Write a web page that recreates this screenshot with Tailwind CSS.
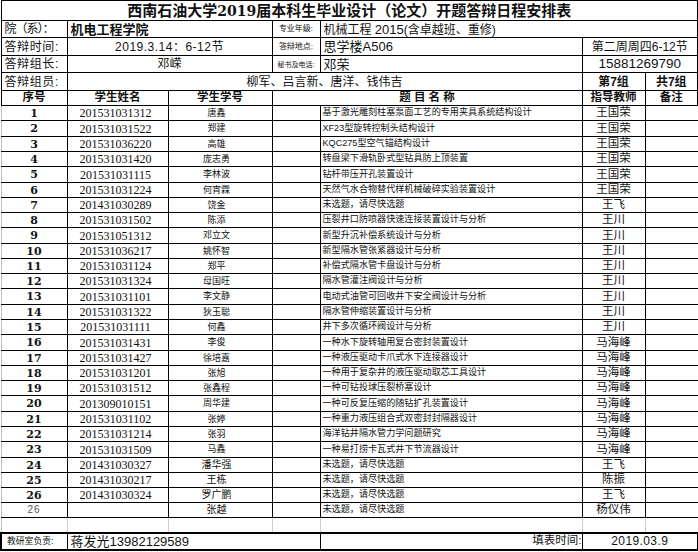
<!DOCTYPE html>
<html lang="zh">
<head>
<meta charset="utf-8">
<script src="https://cdn.jsdelivr.net/npm/@tailwindcss/browser@4"></script>
<title>开题答辩日程安排表</title>
</head>
<body class="bg-white text-[#111] overflow-hidden font-['Liberation_Sans','Noto_Sans_CJK_SC',sans-serif]">
<table class="w-[697px] table-fixed border-collapse leading-none whitespace-nowrap [&_td]:border [&_td]:border-black [&_td]:p-0 [&_td]:text-center [&_td]:overflow-hidden">
<colgroup><col class="w-[66px]"><col class="w-[101px]"><col class="w-[104px]"><col class="w-[48px]"><col class="w-[262px]"><col class="w-[63px]"><col class="w-[53px]"></colgroup>
<thead>
<tr class="h-[20px]"><td colspan="7" class="text-[15px] font-bold border-r-2!">西南石油大学<span class="font-['DejaVu_Serif'] text-[14px]">2019</span>届本科生毕业设计（论文）开题答辩日程安排表</td></tr>
</thead>
<tbody class="[&_td:first-child]:text-left! [&_td:first-child]:pl-[3px]! [&_td:first-child]:text-[12px] [&_td:last-child]:border-r-2!">
<tr class="h-[17px]"><td class="tracking-[-1px]">院（系）：</td><td colspan="2" class="text-left! pl-[3px]! text-[13px] font-bold">机电工程学院</td><td class="text-[8px]">专业年级:</td><td colspan="3" class="text-left! pl-[3px]! text-[12px]">机械工程 <span class="text-[13px]">2015</span>(含卓越班、重修)</td></tr>
<tr class="h-[18px]"><td class="tracking-[.6px]">答辩时间:</td><td colspan="2" class="text-[12px] tracking-[.5px]">2019.3.14：6-12节</td><td class="text-[8px]">答辩地点:</td><td class="text-left! pl-[3px]! text-[13px]">思学楼A506</td><td colspan="2" class="text-[12px]">第二周周四6-12节</td></tr>
<tr class="h-[17px]"><td class="tracking-[.6px]">答辩组长:</td><td colspan="2" class="text-[12px]">邓嵘</td><td class="text-[7px]">秘书及电话:</td><td class="text-left! pl-[3px]! text-[13px]">邓荣</td><td colspan="2" class="text-[13.5px]">15881269790</td></tr>
<tr class="h-[18px]"><td class="tracking-[.6px]">答辩组员:</td><td colspan="4" class="text-[12px]">柳军、吕言新、唐洋、钱伟吉</td><td class="text-[12px] font-bold">第7组</td><td class="text-[12px] font-bold">共7组</td></tr>
</tbody>
<tbody>
<tr class="h-[15px] text-[11.5px] font-bold"><td>序号</td><td>学生姓名</td><td>学生学号</td><td colspan="2">题 目 名 称</td><td>指导教师</td><td class="border-r-2!">备注</td></tr>
</tbody>
<tbody class="[&_td:nth-child(1)]:font-bold [&_td:nth-child(1)]:font-['DejaVu_Serif'] [&_td:nth-child(1)]:text-[11px] [&_td:nth-child(1)]:border-l-[#c4c4c4]! [&_td:nth-child(2)]:font-['Liberation_Serif'] [&_td:nth-child(2)]:text-[12px] [&_td:nth-child(2)]:pr-[4px]! [&_td:nth-child(3)]:text-[9px] [&_td:nth-child(3)]:pr-[7px]! [&_td:nth-child(5)]:text-left! [&_td:nth-child(5)]:pl-[2px]! [&_td:nth-child(5)]:text-[9.1px] [&_td:nth-child(6)]:text-[11.5px] [&_td:last-child]:border-r-0!">
<tr class="h-[15px]"><td>1</td><td>201531031312</td><td>唐鑫</td><td></td><td>基于激光雕刻柱塞泵面工艺的专用夹具系统结构设计</td><td>王国荣</td><td></td></tr>
<tr class="h-[16px]"><td>2</td><td>201531031522</td><td>郑建</td><td></td><td>XF23型旋转控制头结构设计</td><td>王国荣</td><td></td></tr>
<tr class="h-[15px]"><td>3</td><td>201531036220</td><td>高雄</td><td></td><td>KQC275型空气锚结构设计</td><td>王国荣</td><td></td></tr>
<tr class="h-[15px]"><td>4</td><td>201531031420</td><td>庞志勇</td><td></td><td>转盘梁下滑轨卧式型钻具防上顶装置</td><td>王国荣</td><td></td></tr>
<tr class="h-[16px]"><td>5</td><td>201531031115</td><td>李林波</td><td></td><td>钻杆带压开孔装置设计</td><td>王国荣</td><td></td></tr>
<tr class="h-[15px]"><td>6</td><td>201531031224</td><td>何宵霖</td><td></td><td>天然气水合物替代样机械破碎实验装置设计</td><td>王国荣</td><td></td></tr>
<tr class="h-[15px]"><td>7</td><td>201431030289</td><td class="pr-0!">饶金</td><td></td><td>未选题，请尽快选题</td><td>王飞</td><td></td></tr>
<tr class="h-[15px]"><td>8</td><td>201531031502</td><td>陈添</td><td></td><td>压裂井口防喷器快速连接装置设计与分析</td><td>王川</td><td></td></tr>
<tr class="h-[16px]"><td>9</td><td>201531051312</td><td>邓立文</td><td></td><td>新型升沉补偿系统设计与分析</td><td>王川</td><td></td></tr>
<tr class="h-[15px]"><td>10</td><td>201531036217</td><td>姚怀智</td><td></td><td>新型隔水管张紧器设计与分析</td><td>王川</td><td></td></tr>
<tr class="h-[15px]"><td>11</td><td>201531031124</td><td>郑平</td><td></td><td>补偿式隔水管卡盘设计与分析</td><td>王川</td><td></td></tr>
<tr class="h-[15px]"><td>12</td><td>201531031324</td><td>母国旺</td><td></td><td>隔水管灌注阀设计与分析</td><td>王川</td><td></td></tr>
<tr class="h-[16px]"><td>13</td><td>201531031101</td><td>李文静</td><td></td><td>电动式油管可回收井下安全阀设计与分析</td><td>王川</td><td></td></tr>
<tr class="h-[15px]"><td>14</td><td>201531031322</td><td>狄玉聪</td><td></td><td>隔水管伸缩装置设计与分析</td><td>王川</td><td></td></tr>
<tr class="h-[15px]"><td>15</td><td>201531031111</td><td>何鑫</td><td></td><td>井下多次循环阀设计与分析</td><td>王川</td><td></td></tr>
<tr class="h-[16px]"><td>16</td><td>201531031431</td><td>李俊</td><td></td><td>一种水下旋转轴用复合密封装置设计</td><td>马海峰</td><td></td></tr>
<tr class="h-[15px]"><td>17</td><td>201531031427</td><td>徐培嘉</td><td></td><td>一种液压驱动卡爪式水下连接器设计</td><td>马海峰</td><td></td></tr>
<tr class="h-[15px]"><td>18</td><td>201531031201</td><td>张旭</td><td></td><td>一种用于复杂井的液压驱动取芯工具设计</td><td>马海峰</td><td></td></tr>
<tr class="h-[15px]"><td>19</td><td>201531031512</td><td>张鑫程</td><td></td><td>一种可钻投球压裂桥塞设计</td><td>马海峰</td><td></td></tr>
<tr class="h-[16px]"><td>20</td><td>201309010151</td><td>周华建</td><td></td><td>一种可反复压缩的随钻扩孔装置设计</td><td>马海峰</td><td></td></tr>
<tr class="h-[15px]"><td>21</td><td>201531031102</td><td>张婷</td><td></td><td>一种重力液压组合式双密封封隔器设计</td><td>马海峰</td><td></td></tr>
<tr class="h-[15px]"><td>22</td><td>201531031214</td><td>张羽</td><td></td><td>海洋钻井隔水管力学问题研究</td><td>马海峰</td><td></td></tr>
<tr class="h-[16px]"><td>23</td><td>201531031509</td><td>马鑫</td><td></td><td>一种易打捞卡瓦式井下节流器设计</td><td>马海峰</td><td></td></tr>
<tr class="h-[15px]"><td>24</td><td>201431030327</td><td class="pr-0! text-[10px]!">潘华强</td><td></td><td>未选题，请尽快选题</td><td>王飞</td><td></td></tr>
<tr class="h-[15px]"><td>25</td><td>201431030217</td><td class="pr-0! text-[10px]!">王栋</td><td></td><td>未选题，请尽快选题</td><td>陈振</td><td></td></tr>
<tr class="h-[15px]"><td>26</td><td>201431030324</td><td class="pr-0! text-[10px]!">罗广鹏</td><td></td><td>未选题，请尽快选题</td><td>王飞</td><td></td></tr>
<tr class="h-[15px]"><td class="font-normal! font-['Liberation_Sans']! text-[10px]! tracking-[1px] text-[#555] border-l-black!">26</td><td></td><td class="pr-0! text-[10px]!">张越</td><td></td><td>未选题，请尽快选题</td><td>杨仪伟</td><td></td></tr>
<tr class="h-[15px] [&>td]:border-[#cfcfcf]! [&>td]:border-b-black!"><td></td><td></td><td></td><td></td><td></td><td></td><td></td></tr>
</tbody>
<tbody class="[&_td]:border-y-2! [&_td:last-child]:border-r-2!">
<tr class="h-[17px]"><td class="text-[8.8px] text-left! pl-[5px]! border-l-2! border-l-black!">教研室负责:</td><td colspan="3" class="text-left! pl-[3px]! text-[13px]">蒋发光13982129589</td><td class="text-right! text-[11.5px]">填表时间:</td><td colspan="2" class="text-[12px] tracking-[.4px]">2019.03.9</td></tr>
</tbody>
</table>
</body>
</html>
